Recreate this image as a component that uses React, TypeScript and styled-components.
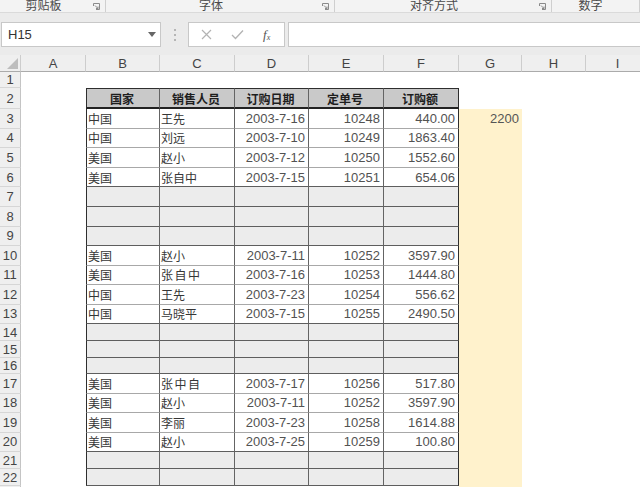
import styled, { createGlobalStyle } from "styled-components";

const GlobalStyle = createGlobalStyle`
  html, body {
    margin: 0;
    padding: 0;
    background: #ffffff;
    overflow: hidden;
  }
  * {
    box-sizing: border-box;
  }
`;

const CJK = `"Noto Sans CJK SC", "Liberation Sans", sans-serif`;
const NUM = `"Liberation Sans", "Noto Sans CJK SC", sans-serif`;

const COLS = [21, 65, 74, 75, 74, 75, 75, 63, 64, 64];
const LETTERS = ["A", "B", "C", "D", "E", "F", "G", "H", "I"];

const Page = styled.div`
  width: 640px;
  height: 487px;
  overflow: hidden;
  display: flex;
  flex-direction: column;
`;

/* ribbon group labels, cut off at the top */
const RibbonStrip = styled.div`
  height: 13px;
  display: flex;
  background: #f3f3f3;
  border-bottom: 1px solid #dadada;
  overflow: hidden;
`;

const Group = styled.div<{ $w?: number }>`
  ${(p) => (p.$w ? `width: ${p.$w}px;` : "flex: 1;")}
  display: flex;
  align-items: flex-end;
  border-right: 1px solid #cfcfcf;
  padding-bottom: 2px;
`;

const GroupLabel = styled.div<{ $pad?: number }>`
  flex: 1;
  text-align: center;
  font-family: ${CJK};
  font-size: 12px;
  line-height: 16px;
  margin-bottom: -3px;
  padding-right: ${(p) => p.$pad ?? 0}px;
  color: #4a4a4a;
`;

const Launcher = styled.svg`
  width: 7px;
  height: 7px;
  margin: 0 5px 0 6px;
  flex: none;
`;

const FormulaBar = styled.div`
  height: 42px;
  background: #ebebeb;
  display: flex;
  align-items: flex-start;
  padding: 9px 0 0 1px;
`;

const NameBox = styled.div`
  width: 160px;
  height: 25px;
  background: #ffffff;
  border: 1px solid #c8c8c8;
  display: flex;
  align-items: center;
  justify-content: space-between;
  padding: 0 4px 0 6px;
  font-family: ${NUM};
  font-size: 13px;
  color: #333;
`;

const Dots = styled.div`
  width: 27px;
  height: 25px;
  display: flex;
  flex-direction: column;
  align-items: center;
  justify-content: center;
  gap: 3px;

  span {
    width: 2px;
    height: 2px;
    background: #b5b5b5;
  }
`;

const FxBox = styled.div`
  width: 97px;
  height: 25px;
  background: #ffffff;
  border: 1px solid #c8c8c8;
  display: flex;
  align-items: center;
  gap: 19px;
  padding: 0 0 0 12px;
`;

const Fx = styled.span`
  font-family: "Liberation Serif", serif;
  font-style: italic;
  font-size: 13px;
  color: #555;

  sub {
    font-size: 8px;
    vertical-align: -1px;
  }
`;

const FormulaInput = styled.div`
  flex: 1;
  height: 25px;
  margin-left: 3px;
  background: #ffffff;
  border: 1px solid #c8c8c8;
  border-right: none;
`;

const Sheet = styled.div`
  flex: 1;
  overflow: hidden;
`;

const SheetRow = styled.div<{ $h: number }>`
  display: grid;
  grid-template-columns: ${COLS.map((c) => c + "px").join(" ")};
  height: ${(p) => p.$h}px;
`;

const ColHead = styled.div`
  background: #efefef;
  border-right: 1px solid #cdcdcd;
  border-bottom: 1px solid #ababab;
  display: flex;
  align-items: center;
  justify-content: center;
  font-family: ${NUM};
  font-size: 13px;
  color: #444;
`;

const Corner = styled(ColHead)`
  align-items: flex-end;
  justify-content: flex-end;
  padding: 0 2px 2px 0;

  &::after {
    content: "";
    width: 0;
    height: 0;
    border-left: 11px solid transparent;
    border-bottom: 11px solid #bdbdbd;
  }
`;

const RowHead = styled.div`
  background: #efefef;
  border-right: 1px solid #c4c4c4;
  border-bottom: 1px solid #d6d6d6;
  display: flex;
  align-items: center;
  justify-content: center;
  font-family: ${NUM};
  font-size: 13px;
  color: #444;
`;

const Blank = styled.div<{ $yellow?: boolean }>`
  background: ${(p) => (p.$yellow ? "#fff2cc" : "#ffffff")};
  display: flex;
  align-items: center;
  justify-content: flex-end;
  padding-right: 3px;
  font-family: ${NUM};
  font-size: 13px;
  color: #555;
`;

type Kind = "head" | "data" | "blank";
type Edge = "heavy" | "dark" | "light";

const EDGE: Record<Edge, string> = {
  heavy: "2px solid #222222",
  dark: "1px solid #5e5e5e",
  light: "1px solid #a8a8a8",
};

const Cell = styled.div<{
  $kind: Kind;
  $first?: boolean;
  $last?: boolean;
  $top?: boolean;
  $edge: Edge;
  $align: "left" | "center" | "right";
  $num?: boolean;
  $spaced?: boolean;
}>`
  background: ${(p) =>
    p.$kind === "head" ? "#c9c9c9" : p.$kind === "blank" ? "#ececec" : "#ffffff"};
  border-right: 1px solid ${(p) => (p.$last ? "#2e2e2e" : "#646464")};
  border-left: ${(p) => (p.$first ? "1px solid #2e2e2e" : "none")};
  border-top: ${(p) => (p.$top ? "1px solid #2e2e2e" : "none")};
  border-bottom: ${(p) => EDGE[p.$edge]};
  display: flex;
  align-items: center;
  justify-content: ${(p) =>
    p.$align === "left" ? "flex-start" : p.$align === "right" ? "flex-end" : "center"};
  padding: 0 3px 0 1px;
  white-space: nowrap;
  font-family: ${(p) => (p.$num ? NUM : CJK)};
  font-size: ${(p) => (p.$num ? 13 : 12)}px;
  font-weight: ${(p) => (p.$kind === "head" ? 700 : 400)};
  letter-spacing: ${(p) => (p.$spaced ? "1.5px" : "0")};
  color: ${(p) => (p.$kind === "head" ? "#1e1e1e" : p.$num ? "#525252" : "#363636")};
`;

interface RowData {
  n: number;
  h: number;
  kind?: Kind;
  cells?: string[];
  g?: string;
  spaced?: boolean;
}

const ROWS: RowData[] = [
  { n: 1, h: 16 },
  { n: 2, h: 21, kind: "head", cells: ["国家", "销售人员", "订购日期", "定单号", "订购额"] },
  { n: 3, h: 19.6, kind: "data", cells: ["中国", "王先", "2003-7-16", "10248", "440.00"], g: "2200" },
  { n: 4, h: 19.6, kind: "data", cells: ["中国", "刘远", "2003-7-10", "10249", "1863.40"] },
  { n: 5, h: 19.6, kind: "data", cells: ["美国", "赵小", "2003-7-12", "10250", "1552.60"] },
  { n: 6, h: 19.6, kind: "data", cells: ["美国", "张自中", "2003-7-15", "10251", "654.06"] },
  { n: 7, h: 19.6, kind: "blank" },
  { n: 8, h: 19.6, kind: "blank" },
  { n: 9, h: 19.6, kind: "blank" },
  { n: 10, h: 19.5, kind: "data", cells: ["美国", "赵小", "2003-7-11", "10252", "3597.90"] },
  { n: 11, h: 19.5, kind: "data", cells: ["美国", "张自中", "2003-7-16", "10253", "1444.80"], spaced: true },
  { n: 12, h: 19.5, kind: "data", cells: ["中国", "王先", "2003-7-23", "10254", "556.62"] },
  { n: 13, h: 19.5, kind: "data", cells: ["中国", "马晓平", "2003-7-15", "10255", "2490.50"] },
  { n: 14, h: 17, kind: "blank" },
  { n: 15, h: 17, kind: "blank" },
  { n: 16, h: 16, kind: "blank" },
  { n: 17, h: 19.5, kind: "data", cells: ["美国", "张中自", "2003-7-17", "10256", "517.80"], spaced: true },
  { n: 18, h: 19.5, kind: "data", cells: ["美国", "赵小", "2003-7-11", "10252", "3597.90"] },
  { n: 19, h: 19.5, kind: "data", cells: ["美国", "李丽", "2003-7-23", "10258", "1614.88"] },
  { n: 20, h: 19.5, kind: "data", cells: ["美国", "赵小", "2003-7-25", "10259", "100.80"] },
  { n: 21, h: 17, kind: "blank" },
  { n: 22, h: 17, kind: "blank" },
  { n: 23, h: 17 },
];

const ALIGN: ("left" | "center" | "right")[] = ["left", "left", "right", "right", "right"];

function edgeFor(i: number): Edge {
  const row = ROWS[i];
  const next = ROWS[i + 1];
  if (row.kind === "head") return "heavy";
  if (row.kind === "blank" || next?.kind === "blank" || !next?.kind) return "dark";
  return "light";
}

function LauncherIcon() {
  return (
    <Launcher viewBox="0 0 7 7">
      <path d="M0.5 3 V0.5 H6.5 V6.5 H3" fill="none" stroke="#8a8a8a" strokeWidth="1" />
      <path d="M2 2.5 L5 5.5 M5 3.5 V5.5 H3" fill="none" stroke="#8a8a8a" strokeWidth="1" />
    </Launcher>
  );
}

export default function App() {
  return (
    <Page>
      <GlobalStyle />
      <RibbonStrip>
        <Group $w={106}>
          <GroupLabel>剪贴板</GroupLabel>
          <LauncherIcon />
        </Group>
        <Group $w={229}>
          <GroupLabel>字体</GroupLabel>
          <LauncherIcon />
        </Group>
        <Group $w={217}>
          <GroupLabel>对齐方式</GroupLabel>
          <LauncherIcon />
        </Group>
        <Group>
          <GroupLabel $pad={10}>数字</GroupLabel>
        </Group>
      </RibbonStrip>

      <FormulaBar>
        <NameBox>
          H15
          <svg width="8" height="5" viewBox="0 0 8 5">
            <path d="M0 0 H8 L4 5 Z" fill="#666" />
          </svg>
        </NameBox>
        <Dots>
          <span />
          <span />
          <span />
        </Dots>
        <FxBox>
          <svg width="11" height="11" viewBox="0 0 11 11">
            <path d="M1 1 L10 10 M10 1 L1 10" stroke="#b3b3b3" strokeWidth="1.2" />
          </svg>
          <svg width="13" height="11" viewBox="0 0 13 11">
            <path d="M1 6 L4.5 9.5 L12 1.5" fill="none" stroke="#b3b3b3" strokeWidth="1.3" />
          </svg>
          <Fx>
            f<sub>x</sub>
          </Fx>
        </FxBox>
        <FormulaInput />
      </FormulaBar>

      <Sheet>
        <SheetRow $h={17}>
          <Corner />
          {LETTERS.map((l) => (
            <ColHead key={l}>{l}</ColHead>
          ))}
        </SheetRow>
        {ROWS.map((row, i) => (
          <SheetRow key={row.n} $h={row.h}>
            <RowHead>{row.n}</RowHead>
            <Blank />
            {row.kind
              ? [0, 1, 2, 3, 4].map((c) => (
                  <Cell
                    key={c}
                    $kind={row.kind!}
                    $first={c === 0}
                    $last={c === 4}
                    $top={row.kind === "head"}
                    $edge={edgeFor(i)}
                    $align={row.kind === "head" ? "center" : ALIGN[c]}
                    $num={row.kind === "data" && c >= 2}
                    $spaced={row.spaced && c === 1}
                  >
                    {row.cells?.[c]}
                  </Cell>
                ))
              : [0, 1, 2, 3, 4].map((c) => <Blank key={c} />)}
            <Blank $yellow={row.n >= 3}>{row.g}</Blank>
            <Blank />
            <Blank />
          </SheetRow>
        ))}
      </Sheet>
    </Page>
  );
}
